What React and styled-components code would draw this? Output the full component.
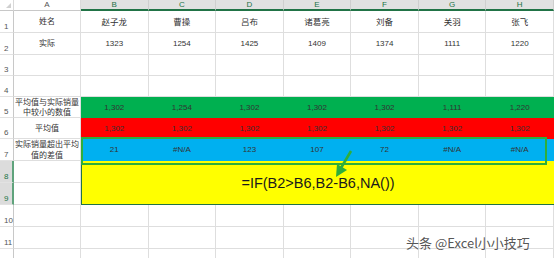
import React from 'react'
import styled, { createGlobalStyle } from 'styled-components'

const GlobalStyle = createGlobalStyle`
  html, body { margin: 0; padding: 0; background: #fff; }
  body { font-family: "Noto Sans CJK SC", "Liberation Sans", sans-serif; }
`

const Page = styled.div`
  position: relative;
  width: 554px;
  height: 258px;
  overflow: hidden;
  background: #fff;
`

const Sheet = styled.div`
  display: grid;
  grid-template-columns: 14px 67px repeat(7, 1fr);
  grid-template-rows: 11px 22px 22px 21px 21px 21px 21px 22px 22px 22px 22px 22px 22px;
  width: 554px;
`

const Corner = styled.div`
  border-right: 1px solid #d9d9d9;
  border-bottom: 1px solid #c8c8c8;
  background: #fff;
  position: relative;
  &::after {
    content: '';
    position: absolute;
    right: 2px;
    bottom: 2px;
    border-left: 5px solid transparent;
    border-bottom: 5px solid #d0d0d0;
  }
`

const ColHead = styled.div`
  display: flex;
  align-items: center;
  justify-content: center;
  font-family: "Liberation Sans", sans-serif;
  font-size: 8px;
  line-height: 1;
  color: ${({ $active }) => ($active ? '#217346' : '#555')};
  background: ${({ $active }) => ($active ? '#e1e1e1' : '#fff')};
  border-right: 1px solid ${({ $active }) => ($active ? '#cfcfcf' : '#dadada')};
  border-bottom: ${({ $active }) => ($active ? '2px solid #217346' : '1px solid #c8c8c8')};
  box-sizing: border-box;
`

const RowHead = styled.div`
  display: flex;
  align-items: flex-end;
  padding: 0 0 1px 4px;
  font-family: "Liberation Sans", sans-serif;
  font-size: 8px;
  line-height: 1;
  color: ${({ $active }) => ($active ? '#217346' : '#555')};
  background: ${({ $active }) => ($active ? '#dcdcdc' : '#fff')};
  border-right: ${({ $active }) => ($active ? '2px solid #5fa37c' : '1px solid #c8c8c8')};
  border-bottom: 1px solid #e2e2e2;
  box-sizing: border-box;
`

const Cell = styled.div`
  display: flex;
  align-items: center;
  justify-content: center;
  text-align: center;
  font-size: 8.5px;
  line-height: 11px;
  color: #333;
  background: ${({ $fill }) => $fill || '#fff'};
  border-right: 1px solid ${({ $fill }) => $fill || '#dedede'};
  border-bottom: 1px solid ${({ $fill }) => $fill || '#dedede'};
  box-sizing: border-box;
  overflow: hidden;
`

const Label = styled(Cell)`
  flex-direction: column;
  font-size: 8px;
  line-height: 10.5px;
  color: #333;
  white-space: nowrap;
  overflow: visible;
`

const NumCell = styled(Cell)`
  font-family: "Liberation Sans", sans-serif;
  font-size: 8px;
`

const Merged = styled.div`
  grid-column: 3 / 10;
  grid-row: 9 / 11;
  display: flex;
  align-items: center;
  justify-content: center;
  background: #ffff00;
  border-left: 1px solid #217346;
  border-bottom: 1px solid #217346;
  box-sizing: border-box;
  font-family: "Liberation Sans", sans-serif;
  font-size: 14.5px;
  color: #1a1a1a;
  padding-top: 1px;
`

const Highlight = styled.div`
  position: absolute;
  left: 81px;
  top: 137px;
  width: 466px;
  height: 28px;
  border: 2px solid #2fae3a;
  box-sizing: border-box;
  pointer-events: none;
`

const Arrow = styled.svg`
  position: absolute;
  left: 330px;
  top: 146px;
  overflow: visible;
`

const Watermark = styled.div`
  position: absolute;
  left: 406px;
  top: 233px;
  font-family: "Noto Sans CJK SC", "Liberation Sans", sans-serif;
  font-size: 13px;
  line-height: 20px;
  color: rgba(40, 40, 40, 0.8);
`

const cols = ['A', 'B', 'C', 'D', 'E', 'F', 'G', 'H']
const names = ['赵子龙', '曹操', '吕布', '诸葛亮', '刘备', '关羽', '张飞']
const actual = ['1323', '1254', '1425', '1409', '1374', '1111', '1220']
const minVals = ['1,302', '1,254', '1,302', '1,302', '1,302', '1,111', '1,220']
const avg = ['1,302', '1,302', '1,302', '1,302', '1,302', '1,302', '1,302']
const diff = ['21', '#N/A', '123', '107', '72', '#N/A', '#N/A']

const GREEN = '#00b050'
const RED = '#ff0000'
const BLUE = '#00b0f0'

const App = () => {
  const row = (n, label, values, fill, num) => (
    <React.Fragment key={n}>
      <RowHead>{n}</RowHead>
      <Label>
        {label.split('\n').map((line, i) => (
          <span key={i}>{line}</span>
        ))}
      </Label>
      {values.map((v, i) =>
        num ? (
          <NumCell key={i} $fill={fill}>{v}</NumCell>
        ) : (
          <Cell key={i} $fill={fill}>{v}</Cell>
        )
      )}
    </React.Fragment>
  )
  const blank = ['', '', '', '', '', '', '']

  return (
    <Page>
      <GlobalStyle />
      <Sheet>
        <Corner />
        {cols.map((c) => (
          <ColHead key={c} $active={c !== 'A'}>{c}</ColHead>
        ))}
        {row(1, '姓名', names)}
        {row(2, '实际', actual, null, true)}
        {row(3, '', blank)}
        {row(4, '', blank)}
        {row(5, '平均值与实际销量\n中较小的数值', minVals, GREEN, true)}
        {row(6, '平均值', avg, RED, true)}
        {row(7, '实际销量超出平均\n值的差值', diff, BLUE, true)}
        <RowHead $active>8</RowHead>
        <Label />
        <RowHead $active style={{ gridRow: 10, gridColumn: 1 }}>9</RowHead>
        <Label style={{ gridRow: 10, gridColumn: 2 }} />
        <Merged>=IF(B2&gt;B6,B2-B6,NA())</Merged>
        {row(10, '', blank)}
        {row(11, '', blank)}
        {row('', '', blank)}
      </Sheet>
      <Highlight />
      <Arrow width="24" height="34" viewBox="0 0 24 34">
        <line x1="21" y1="5" x2="11" y2="22" stroke="#2fae3a" strokeWidth="2.6" />
        <polygon points="6,31 7,18 17,24" fill="#2fae3a" />
      </Arrow>
      <Watermark>头条 @Excel小小技巧</Watermark>
    </Page>
  )
}

export default App
